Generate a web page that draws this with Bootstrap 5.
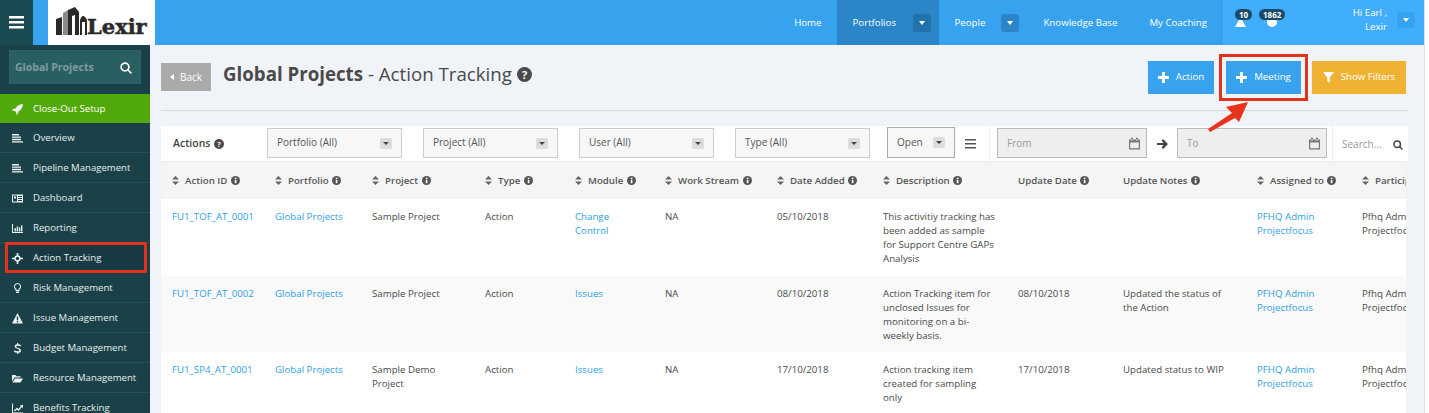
<!DOCTYPE html>
<html lang="en"><head><meta charset="utf-8"><title>Action Tracking</title>
<link href="https://cdn.jsdelivr.net/npm/bootstrap@5.3.0/dist/css/bootstrap.min.css" rel="stylesheet">
<style>
html,body{height:413px;overflow:hidden}
body{font-family:"Open Sans",sans-serif;font-size:10px;color:#4a4a4a;background:#f0f4f8;position:relative}
a{color:#2f9fe0;text-decoration:none}
.topbar{height:45px;background:#37a3ee}
.burger{width:33px;background:#1a4b53}
.brand{width:107px;margin-left:15px;background:#fff}
.logotext{font-family:"DejaVu Serif",serif;font-weight:700;font-size:21px;fill:#2a2a2a;stroke:#2a2a2a;stroke-width:.5px}
.topnav{color:#fff}
.topnav .lnk{color:#fff;font-size:9.7px;line-height:45px;display:block}
.activecell{background:#2a86c7}
.caretbtn{width:18px;height:18px;border-radius:3px;background:#2a86c7;display:flex;align-items:center;justify-content:center;flex:none}
.activecell .caretbtn{background:#2273ad}
.caretbtn::after,.tri::after{content:"";border-left:3.5px solid transparent;border-right:3.5px solid transparent;border-top:4px solid #fff}
.pill{position:absolute;top:9px;height:11px;border-radius:6px;background:#1a4b6b;color:#fff;font-size:8px;font-weight:700;line-height:11px;padding:0 4px}
.shell{height:368px}
.sidebar{width:150px;background:#1a4048;flex:none;overflow:hidden;color:#e8eeee}
.sidesearch{margin:5px 9px 10px;height:34px;background:#2a5f62;border:1px solid #2f6266;padding:2px 8px 0 5px;color:#7e9c9d;font-weight:700;font-size:10.5px}
.sideitem{height:30px;padding-left:12px;padding-top:1px;border-bottom:1px solid #24505a;gap:10px;font-size:9.6px;color:#e8eeee}
.sideitem.on{background:#52a90c;color:#fff;height:29px;border:0}
.sideitem svg{width:11px;height:11px;flex:none;fill:#eef3f3}
.sideitem.mark-red{outline:3px solid #e3321a;outline-offset:-3px;margin:-1px 3px 0 5px;padding-left:7px;padding-top:3px;height:31px;background:#173a42;border-radius:1px}
.content{min-width:0;flex:1;position:relative}
.headrow{height:66px;margin:0 21px 0 11px;border-bottom:1px solid #d6dadd;padding-top:18px}
.backbtn{width:50px;height:28px;background:#aaa;color:#fff;font-size:10px;gap:6px;margin-right:12px}
.backbtn::before{content:"";border-top:3px solid transparent;border-bottom:3px solid transparent;border-right:4px solid #fff}
h1.ttl{font-size:18.7px;font-weight:400;color:#4a4a4a;margin:-2px 0 0;line-height:26px}
.ttl b{font-weight:700}
.act{height:33px;background:#37a3ee;color:#fff;font-size:9.7px;gap:7px;justify-content:center;display:flex;align-items:center}
.act svg{width:11px;height:11px;fill:#fff}
.actrow{position:absolute;right:23px;top:16px;gap:11px;align-items:flex-start}
.meetwrap{outline:3px solid #e3321a;outline-offset:4px;margin-left:1px}
.panel{margin:15px 21px 0 11px;height:300px;overflow:hidden}
.filters{height:36px;border-bottom:1px solid #eee;background:#fff}
.fttl{width:106px;padding-left:12px;font-size:10.5px;font-weight:600;gap:4px;color:#444}
.pick{height:30px;background:#f7f7f7;border:1px solid #ccc;color:#555;padding:0 9px;display:flex;align-items:center;justify-content:space-between;font-size:10px;flex:none;margin-top:-2px}
.tri{width:12px;height:11px;border-radius:2px;background:#ddd;display:flex;align-items:center;justify-content:center;margin-top:2px}
.tri::after{border-top-color:#444;border-left-width:3px;border-right-width:3px;border-top-width:3px}
.dbox{height:30px;background:#eee;border:1px solid #bbb;color:#999;font-size:10px;padding:1px 5px 0 9px;display:flex;align-items:center;justify-content:space-between;margin-top:-2px;width:150px;flex:none}
.tblclip{overflow:hidden;margin-right:2px;background:#fff}
.grid-tbl{table-layout:fixed;width:1280px;margin:0;font-size:9.7px;--bs-table-bg:transparent;color:#4a4a4a}
.grid-tbl th{height:37px;background:#f5f5f5;font-size:9.7px;font-weight:600;padding:2px 0 0 11px;vertical-align:middle;border:0;color:#555;white-space:nowrap}
.grid-tbl td{padding:11px 11px 0 11px;line-height:14px;vertical-align:top;border:0;color:#4a4a4a}
.grid-tbl td a{color:#2f9fe0}
.grid-tbl tr.rowa{height:77px}.grid-tbl tr.rowb{height:76px;background:#f9f9f9}
.sorter{display:inline-block;width:7px;height:9px;margin-right:6px;vertical-align:-1px}
.inf{display:inline-block;width:9px;height:9px;vertical-align:-1px;margin-left:1px}
.arrowmark{position:absolute;left:1208px;top:102px;width:40px;height:30px}
.edge{position:absolute;right:0;top:0;width:5px;height:413px;background:#fff;border-left:1px solid #dde1e4}
</style></head><body>
<svg width="0" height="0" class="position-absolute"><defs>
<symbol id="s" viewBox="0 0 7 9"><path d="M3.5 0 7 3.6H0zM3.5 9 0 5.4h7z" fill="#666"/></symbol>
<symbol id="i" viewBox="0 0 10 10"><circle cx="5" cy="5" r="5" fill="#555"/><rect x="4.2" y="4.2" width="1.8" height="3.8" fill="#fff"/><rect x="4.2" y="1.8" width="1.8" height="1.6" fill="#fff"/></symbol>
<symbol id="cal" viewBox="0 0 13 13"><path d="M1 2.5h11v10H1zM2.2 5.5v5.8h8.6V5.5zM3 .8h2v2.8H3zM8 .8h2v2.8H8z" fill="#777" fill-rule="evenodd"/></symbol>
<symbol id="plus" viewBox="0 0 11 11"><path d="M4 0h3v4h4v3H7v4H4V7H0V4h4z"/></symbol>
<symbol id="list" viewBox="0 0 11 11"><path d="M0 1h7v1.4H0zM0 3.4h9v1.4H0zM0 5.8h9v1.4H0zM0 8.2h11v1.4H0z"/></symbol>
</defs></svg>

<header class="topbar d-flex">
  <div class="burger d-flex align-items-center justify-content-center"><svg width="15" height="13" viewBox="0 0 15 13" fill="#fff"><path d="M0 0h15v2.4H0zM0 5h15v2.4H0zM0 10h15v2.4H0z"/></svg></div>
  <div class="brand">
    <svg width="107" height="45" viewBox="0 0 107 45"><path d="M8 35V19l6-2v18zM20 35V10l7-3 4 5v23h-4V15l-3 1v19z" fill="#2a2a2a"/><path d="M15 35V13l5-3v25z" fill="#8a8a8a"/><path d="M32 35V21c0-3 2-5 3-5s4 2 4 5v14h-2V22h-3v13z" fill="#2a2a2a"/><text class="logotext" x="39" y="34">Lexir</text></svg>
  </div>
  <div class="flex-grow-1"></div>
  <nav class="topnav d-flex align-items-stretch">
    <a class="lnk px-0" style="margin-right:15px" href="#">Home</a>
    <div class="activecell d-flex align-items-center ps-3 pe-2" style="width:102px"><a class="lnk" href="#">Portfolios</a><span class="caretbtn ms-auto"></span></div>
    <div class="d-flex align-items-center gap-2" style="margin:0 24px 0 16px"><a class="lnk" href="#">People</a><span class="caretbtn ms-2"></span></div>
    <a class="lnk" style="margin-right:32px" href="#">Knowledge Base</a>
    <a class="lnk" style="margin-right:16px" href="#">My Coaching</a>
  </nav>
  <div class="position-relative d-flex" style="width:206px;background:#40aefc">
    <svg class="position-absolute" style="left:12px;top:17px" width="11" height="10" viewBox="0 0 11 10"><path d="M5.500 0 11 10H0z" fill="#fff"/></svg>
    <span class="pill" style="left:12px">10</span>
    <svg class="position-absolute" style="left:44px;top:17px" width="10" height="10" viewBox="0 0 10 10"><circle cx="5" cy="5" r="5" fill="#fff"/></svg>
    <span class="pill" style="left:36px">1862</span>
    <div class="text-white text-end ms-auto" style="margin:6px 10px 0 0;line-height:14px;font-size:9.7px">Hi Earl ,<br>Lexir</div>
    <span class="caretbtn" style="margin:12px 14px 0 0;background:#37a3ee;height:16px"></span>
  </div>
</header>

<div class="shell d-flex">
  <aside class="sidebar">
    <div class="sidesearch d-flex align-items-center justify-content-between"><span>Global Projects</span><svg width="12" height="12" viewBox="0 0 12 12" fill="none" stroke="#fff" stroke-width="1.7"><circle cx="5" cy="5" r="3.9"/><path d="m8 8 3.4 3.4"/></svg></div>
    <div class="sideitem on d-flex align-items-center"><svg viewBox="0 0 11 11"><path d="M11 0C7 .3 4.500 2.500 3.500 4.500L1 5 0 6.500l2.500.3 1.800 1.800.2 2.400L6 9.500 6.500 7.500C8.500 6.500 10.700 4 11 0z"/></svg><span>Close-Out Setup</span></div>
    <div class="sideitem d-flex align-items-center"><svg><use href="#list"/></svg><span>Overview</span></div>
    <div class="sideitem d-flex align-items-center"><svg><use href="#list"/></svg><span>Pipeline Management</span></div>
    <div class="sideitem d-flex align-items-center"><svg viewBox="0 0 11 11"><path fill-rule="evenodd" d="M0 1.500h11v8H0zM1 2.500v6h4v-6zM6 3v1h4V3zM6 5v1h4V5zM6 7v1h4V7zM2 3.500h2v2H2z"/></svg><span>Dashboard</span></div>
    <div class="sideitem d-flex align-items-center"><svg viewBox="0 0 11 11"><path d="M0 1h1v8h10v1H0zM2.500 5h1.400v3.500H2.500zM4.700 3.500h1.400v5H4.700zM6.900 4.500h1.400v4H6.900zM9 2.500h1.400v6H9z"/></svg><span>Reporting</span></div>
    <div class="sideitem mark-red d-flex align-items-center"><svg viewBox="0 0 11 11"><path fill-rule="evenodd" d="M4.700 0h1.600v2.300a3.300 3.300 0 0 1 2.400 2.400H11v1.600H8.700a3.300 3.300 0 0 1-2.400 2.400V11H4.700V8.700a3.300 3.300 0 0 1-2.400-2.400H0V4.700h2.300a3.300 3.300 0 0 1 2.400-2.400zM5.500 3.800a1.700 1.700 0 1 0 0 3.400 1.700 1.700 0 0 0 0-3.400z"/></svg><span>Action Tracking</span></div>
    <div class="sideitem d-flex align-items-center"><svg viewBox="0 0 11 11"><path fill-rule="evenodd" d="M5.500 0A3.500 3.500 0 0 0 3.500 6.400V8h4V6.400A3.500 3.500 0 0 0 5.500 0zm0 1A2.500 2.500 0 0 1 6.500 5.800V7h-2V5.800A2.500 2.500 0 0 1 5.500 1zM4 8.600h3V10H4z"/></svg><span>Risk Management</span></div>
    <div class="sideitem d-flex align-items-center"><svg viewBox="0 0 11 11"><path fill-rule="evenodd" d="M5.500 0 11 10.500H0zM4.800 3.500v3.800h1.400V3.500zm0 4.600v1.300h1.400V8.100z"/></svg><span>Issue Management</span></div>
    <div class="sideitem d-flex align-items-center"><svg viewBox="0 0 11 11"><path d="M5 0h1.200v1.300c1.200.1 2.200.5 2.800.9l-.6 1.300c-.7-.4-1.600-.8-2.600-.8-1 0-1.500.4-1.500 1 0 .6.600.9 2 1.400 1.800.6 2.700 1.400 2.700 2.600 0 1.300-1 2.200-2.800 2.400V11H5V9.700C3.800 9.600 2.700 9.200 2 8.700l.6-1.400c.8.600 1.900 1 2.900 1 1.100 0 1.700-.4 1.700-1.100 0-.6-.6-1-1.900-1.400C3.500 5.200 2.600 4.500 2.600 3.300 2.600 2.200 3.500 1.400 5 1.300z"/></svg><span>Budget Management</span></div>
    <div class="sideitem d-flex align-items-center"><svg viewBox="0 0 11 11"><path d="M0 2h3.500l1 1.200h4V4.600H2.500L0 8.500zM3 5.500h8L8.500 9.500H.5z"/></svg><span>Resource Management</span></div>
    <div class="sideitem d-flex align-items-center"><svg viewBox="0 0 11 11"><path d="M0 .5h1v9h10v1H0zM2 7.500 5 4.500l1.500 1.500L9 3 8 2h3v3L10 4 6.500 8 5 6.500 2.800 8.500z"/></svg><span>Benefits Tracking</span></div>
  </aside>

  <main class="content">
    <div class="headrow d-flex align-items-start">
      <a class="backbtn d-flex align-items-center justify-content-center" href="#" style="color:#fff">Back</a>
      <h1 class="ttl"><b>Global Projects</b> - Action Tracking <svg width="15" height="15" viewBox="0 0 15 15" style="vertical-align:-1px"><circle cx="7.500" cy="7.500" r="7.500" fill="#4a4a4a"/><text x="7.500" y="11.500" text-anchor="middle" font-family="Open Sans" font-weight="700" font-size="11" fill="#fff">?</text></svg></h1>
    </div>
    <div class="actrow d-flex">
      <a class="act" href="#" style="width:66px"><svg><use href="#plus"/></svg>Action</a>
      <a class="act meetwrap" href="#" style="width:75px"><svg><use href="#plus"/></svg>Meeting</a>
      <a class="act" href="#" style="width:94px;background:#f0b232"><svg viewBox="0 0 11 11"><path d="M0 0h11L6.800 5.500V11L4.200 9V5.500z"/></svg>Show Filters</a>
    </div>
    <section class="panel">
      <div class="filters d-flex align-items-center">
        <div class="fttl d-flex align-items-center">Actions <svg width="10" height="10" viewBox="0 0 15 15"><circle cx="7.500" cy="7.500" r="7.500" fill="#4a4a4a"/><text x="7.500" y="11.500" text-anchor="middle" font-family="Open Sans" font-weight="700" font-size="11" fill="#fff">?</text></svg></div>
        <div class="pick" style="width:135px">Portfolio (All)<span class="tri"></span></div>
        <div class="pick" style="width:135px;margin-left:21px">Project (All)<span class="tri"></span></div>
        <div class="pick" style="width:135px;margin-left:21px">User (All)<span class="tri"></span></div>
        <div class="pick" style="width:135px;margin-left:21px">Type (All)<span class="tri"></span></div>
        <div class="pick" style="width:68px;margin-left:17px;border-color:#aaa;height:31px">Open<span class="tri" style="margin-top:0"></span></div>
        <svg width="11" height="10" viewBox="0 0 11 10" fill="#555" style="margin-left:10px"><path d="M0 0h11v1.500H0zM0 4h11v1.500H0zM0 8h11v1.500H0z"/></svg>
        <div style="width:1px;height:36px;background:#eee;margin-left:13px"></div>
        <div class="dbox" style="margin-left:7px">From<svg width="13" height="13"><use href="#cal"/></svg></div>
        <svg width="11" height="10" viewBox="0 0 11 10" fill="#444" style="margin:0 9px 0 10px"><path d="M6 0 11 5 6 10 4.600 8.600 6.400 6H0V4h6.400L4.600 1.400z"/></svg>
        <div class="dbox">To<svg width="13" height="13"><use href="#cal"/></svg></div>
        <div style="width:1px;height:36px;background:#eee;margin-left:5px"></div>
        <div class="d-flex align-items-center justify-content-between flex-grow-1" style="padding:2px 5px 0 9px;color:#999;font-size:10px">Search...<svg width="10" height="10" viewBox="0 0 12 12" fill="none" stroke="#444" stroke-width="1.800"><circle cx="5" cy="5" r="3.900"/><path d="m8 8 3.400 3.400"/></svg></div>
      </div>
      <div class="tblclip">
      <table class="table grid-tbl">
        <colgroup><col style="width:103px"><col style="width:97px"><col style="width:113px"><col style="width:90px"><col style="width:90px"><col style="width:112px"><col style="width:106px"><col style="width:135px"><col style="width:105px"><col style="width:134px"><col style="width:105px"><col style="width:90px"></colgroup>
        <thead><tr>
          <th><svg class="sorter"><use href="#s"/></svg>Action ID <svg class="inf"><use href="#i"/></svg></th>
          <th><svg class="sorter"><use href="#s"/></svg>Portfolio <svg class="inf"><use href="#i"/></svg></th>
          <th><svg class="sorter"><use href="#s"/></svg>Project <svg class="inf"><use href="#i"/></svg></th>
          <th><svg class="sorter"><use href="#s"/></svg>Type <svg class="inf"><use href="#i"/></svg></th>
          <th><svg class="sorter"><use href="#s"/></svg>Module <svg class="inf"><use href="#i"/></svg></th>
          <th><svg class="sorter"><use href="#s"/></svg>Work Stream <svg class="inf"><use href="#i"/></svg></th>
          <th><svg class="sorter"><use href="#s"/></svg>Date Added <svg class="inf"><use href="#i"/></svg></th>
          <th><svg class="sorter"><use href="#s"/></svg>Description <svg class="inf"><use href="#i"/></svg></th>
          <th>Update Date <svg class="inf"><use href="#i"/></svg></th>
          <th>Update Notes <svg class="inf"><use href="#i"/></svg></th>
          <th><svg class="sorter"><use href="#s"/></svg>Assigned to <svg class="inf"><use href="#i"/></svg></th>
          <th><svg class="sorter"><use href="#s"/></svg>Participants</th>
        </tr></thead>
        <tbody>
          <tr class="rowa"><td><a href="#">FU1_TOF_AT_0001</a></td><td><a href="#">Global Projects</a></td><td>Sample Project</td><td>Action</td><td><a href="#">Change Control</a></td><td>NA</td><td>05/10/2018</td><td>This activitiy tracking has been added as sample for Support Centre GAPs Analysis</td><td></td><td></td><td><a href="#">PFHQ Admin Projectfocus</a></td><td>Pfhq Admin Projectfocus</td></tr>
          <tr class="rowb"><td><a href="#">FU1_TOF_AT_0002</a></td><td><a href="#">Global Projects</a></td><td>Sample Project</td><td>Action</td><td><a href="#">Issues</a></td><td>NA</td><td>08/10/2018</td><td>Action Tracking item for unclosed Issues for monitoring on a bi-weekly basis.</td><td>08/10/2018</td><td>Updated the status of the Action</td><td><a href="#">PFHQ Admin Projectfocus</a></td><td>Pfhq Admin Projectfocus</td></tr>
          <tr class="rowa"><td><a href="#">FU1_SP4_AT_0001</a></td><td><a href="#">Global Projects</a></td><td>Sample Demo Project</td><td>Action</td><td><a href="#">Issues</a></td><td>NA</td><td>17/10/2018</td><td>Action tracking item created for sampling only</td><td>17/10/2018</td><td>Updated status to WIP</td><td><a href="#">PFHQ Admin Projectfocus</a></td><td>Pfhq Admin Projectfocus</td></tr>
        </tbody>
      </table>
      </div>
    </section>
  </main>
</div>
<svg class="arrowmark" viewBox="0 0 40 30"><path d="M40 0 18 5 24 11 0 27 2 30 27 16 31 20z" fill="#e9341b"/></svg>
<div class="edge"></div>
</body></html>
